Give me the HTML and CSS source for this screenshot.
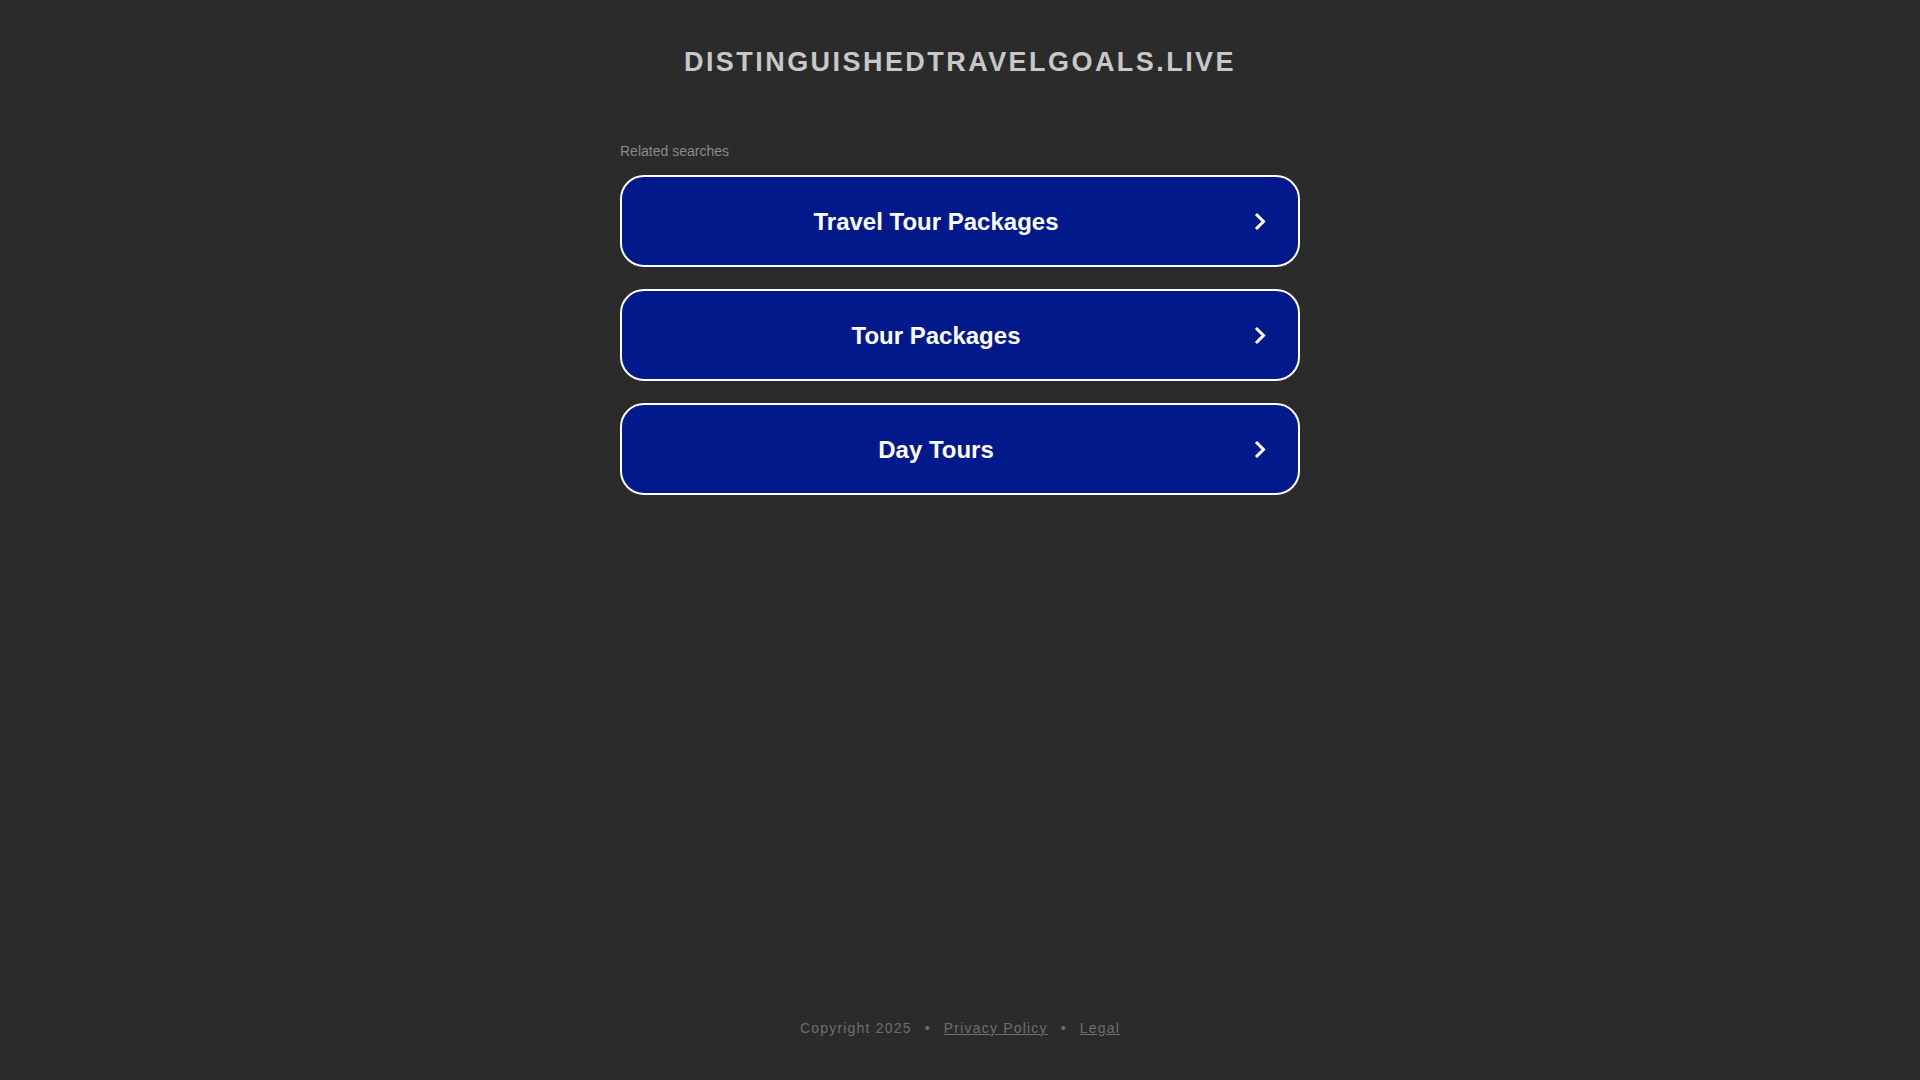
FILE: index.html
```html
<!DOCTYPE html>
<html lang="en">
<head>
<meta charset="utf-8">
<title>distinguishedtravelgoals.live</title>
<link rel="stylesheet" href="styles.css">
</head>
<body>
<div class="page">
  <header class="header">
    <h1 class="domain">distinguishedtravelgoals.live</h1>
  </header>
  <main class="main">
    <div class="related">Related searches</div>
    <a class="btn" href="#"><span class="label">Travel Tour Packages</span><svg class="chev" width="12" height="19" viewBox="0 0 12 19"><path d="M2 2 L9.5 9.5 L2 17" fill="none" stroke="#fff" stroke-width="3"/></svg></a>
    <a class="btn" href="#"><span class="label">Tour Packages</span><svg class="chev" width="12" height="19" viewBox="0 0 12 19"><path d="M2 2 L9.5 9.5 L2 17" fill="none" stroke="#fff" stroke-width="3"/></svg></a>
    <a class="btn" href="#"><span class="label">Day Tours</span><svg class="chev" width="12" height="19" viewBox="0 0 12 19"><path d="M2 2 L9.5 9.5 L2 17" fill="none" stroke="#fff" stroke-width="3"/></svg></a>
  </main>
  <footer class="footer">
    <span>Copyright 2025</span>
    <span class="sep">•</span>
    <a href="#">Privacy Policy</a>
    <span class="sep">•</span>
    <a href="#">Legal</a>
  </footer>
</div>
</body>
</html>
```
FILE: styles.css
```css
html, body {
  margin: 0;
  padding: 0;
}
body {
  background: #2b2b2b;
  font-family: "Liberation Sans", Arial, sans-serif;
}
.page {
  min-height: 100vh;
  display: flex;
  flex-direction: column;
  align-items: center;
}
.header {
  padding-top: 48px;
}
.domain {
  margin: 0;
  font-size: 27px;
  line-height: 28px;
  font-weight: bold;
  text-transform: uppercase;
  letter-spacing: 2.45px;
  color: #c8c8c8;
  text-align: center;
}
.main {
  width: 680px;
  margin-top: 68px;
  display: flex;
  flex-direction: column;
}
.related {
  font-size: 14px;
  line-height: 14px;
  color: #8a8a8a;
  margin-bottom: 17px;
}
.btn {
  box-sizing: border-box;
  height: 92px;
  border: 2px solid #fff;
  border-radius: 24px;
  background: #02198b;
  display: flex;
  align-items: center;
  text-decoration: none;
  margin-bottom: 22px;
}
.label {
  flex: 1;
  text-align: center;
  color: #fff;
  font-size: 24px;
  font-weight: bold;
  padding-top: 2px;
}
.chev {
  margin-left: 4px;
  margin-right: 32px;
}
.footer {
  margin-top: auto;
  padding-bottom: 42px;
  display: flex;
  gap: 13px;
  font-size: 14px;
  line-height: 20px;
  letter-spacing: 1.2px;
  color: #6e6e6e;
}
.footer a {
  color: #6e6e6e;
  text-decoration: underline;
}
```
